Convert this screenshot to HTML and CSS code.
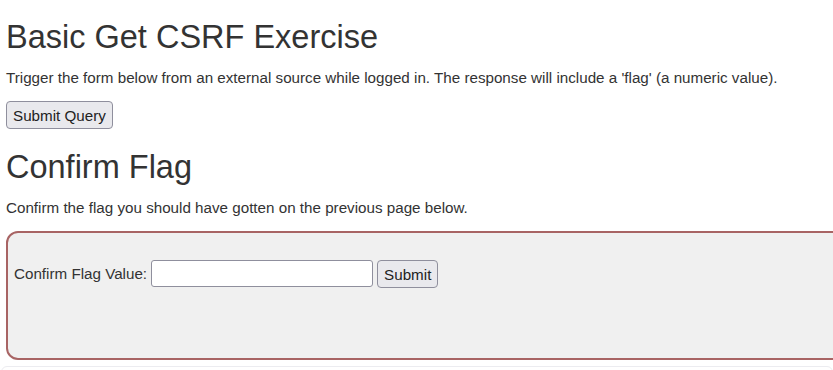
FILE: index.html
```html
<!DOCTYPE html>
<html>
<head>
<meta charset="utf-8">
<title>Basic Get CSRF Exercise</title>
<link rel="stylesheet" href="styles.css">
</head>
<body>
<div class="page">
  <h1 class="title">Basic Get CSRF Exercise</h1>
  <p class="text">Trigger the form below from an external source while logged in. The response will include a 'flag' (a numeric value).</p>
  <form class="query-form">
    <button type="button" class="btn">Submit Query</button>
  </form>
  <h1 class="title title-second">Confirm Flag</h1>
  <p class="text text-second">Confirm the flag you should have gotten on the previous page below.</p>
  <div class="flag-box">
    <form class="flag-form">
      <label class="flag-label" for="flag">Confirm Flag Value:</label>
      <input class="flag-input" id="flag" type="text">
      <button type="button" class="btn btn-small">Submit</button>
    </form>
  </div>
  <div class="footer-box"></div>
</div>
</body>
</html>
```

FILE: styles.css
```css
html, body {
  margin: 0;
  overflow: hidden;
}
body {
  background: #ffffff;
  font-family: "Liberation Sans", Arial, sans-serif;
  color: #333333;
}
.page {
  padding: 0 0 0 6px;
  height: 370px;
  overflow: hidden;
}
.title {
  margin: 0;
  padding-top: 17px;
  font-size: 32.5px;
  font-weight: normal;
  line-height: 40px;
  color: #333333;
}
.title-second {
  padding-top: 18px;
}
.text {
  margin: 11px 0 0 0;
  font-size: 15.2px;
  line-height: 20px;
  white-space: nowrap;
}
.text-second {
  margin-top: 11px;
}
.query-form {
  margin-top: 13px;
}
.btn {
  font-family: "Liberation Sans", Arial, sans-serif;
  font-size: 15.2px;
  color: #222;
  background: #e9e9ed;
  border: 1px solid #8f8f9d;
  border-radius: 4px;
  height: 28px;
  padding: 0 6px;
}
.flag-box {
  margin-top: 13px;
  width: 900px;
  height: 125px;
  background: #f0f0f0;
  border: 2px solid #a86464;
  border-radius: 12px;
}
.flag-form {
  display: flex;
  align-items: center;
  padding: 26px 6px 0;
  gap: 4px;
}
.flag-label {
  font-size: 15.2px;
  color: #333;
}
.flag-input {
  width: 220px;
  height: 25px;
  padding: 0;
  margin: 0;
  border: 1px solid #8f8f9d;
  border-radius: 3px;
  background: #fff;
}
.btn-small {
  height: 28px;
  margin-top: 1px;
}
.footer-box {
  margin: 6px 0 0 -5px;
  height: 20px;
  border: 1px solid #ececf0;
  border-radius: 6px;
}
```
